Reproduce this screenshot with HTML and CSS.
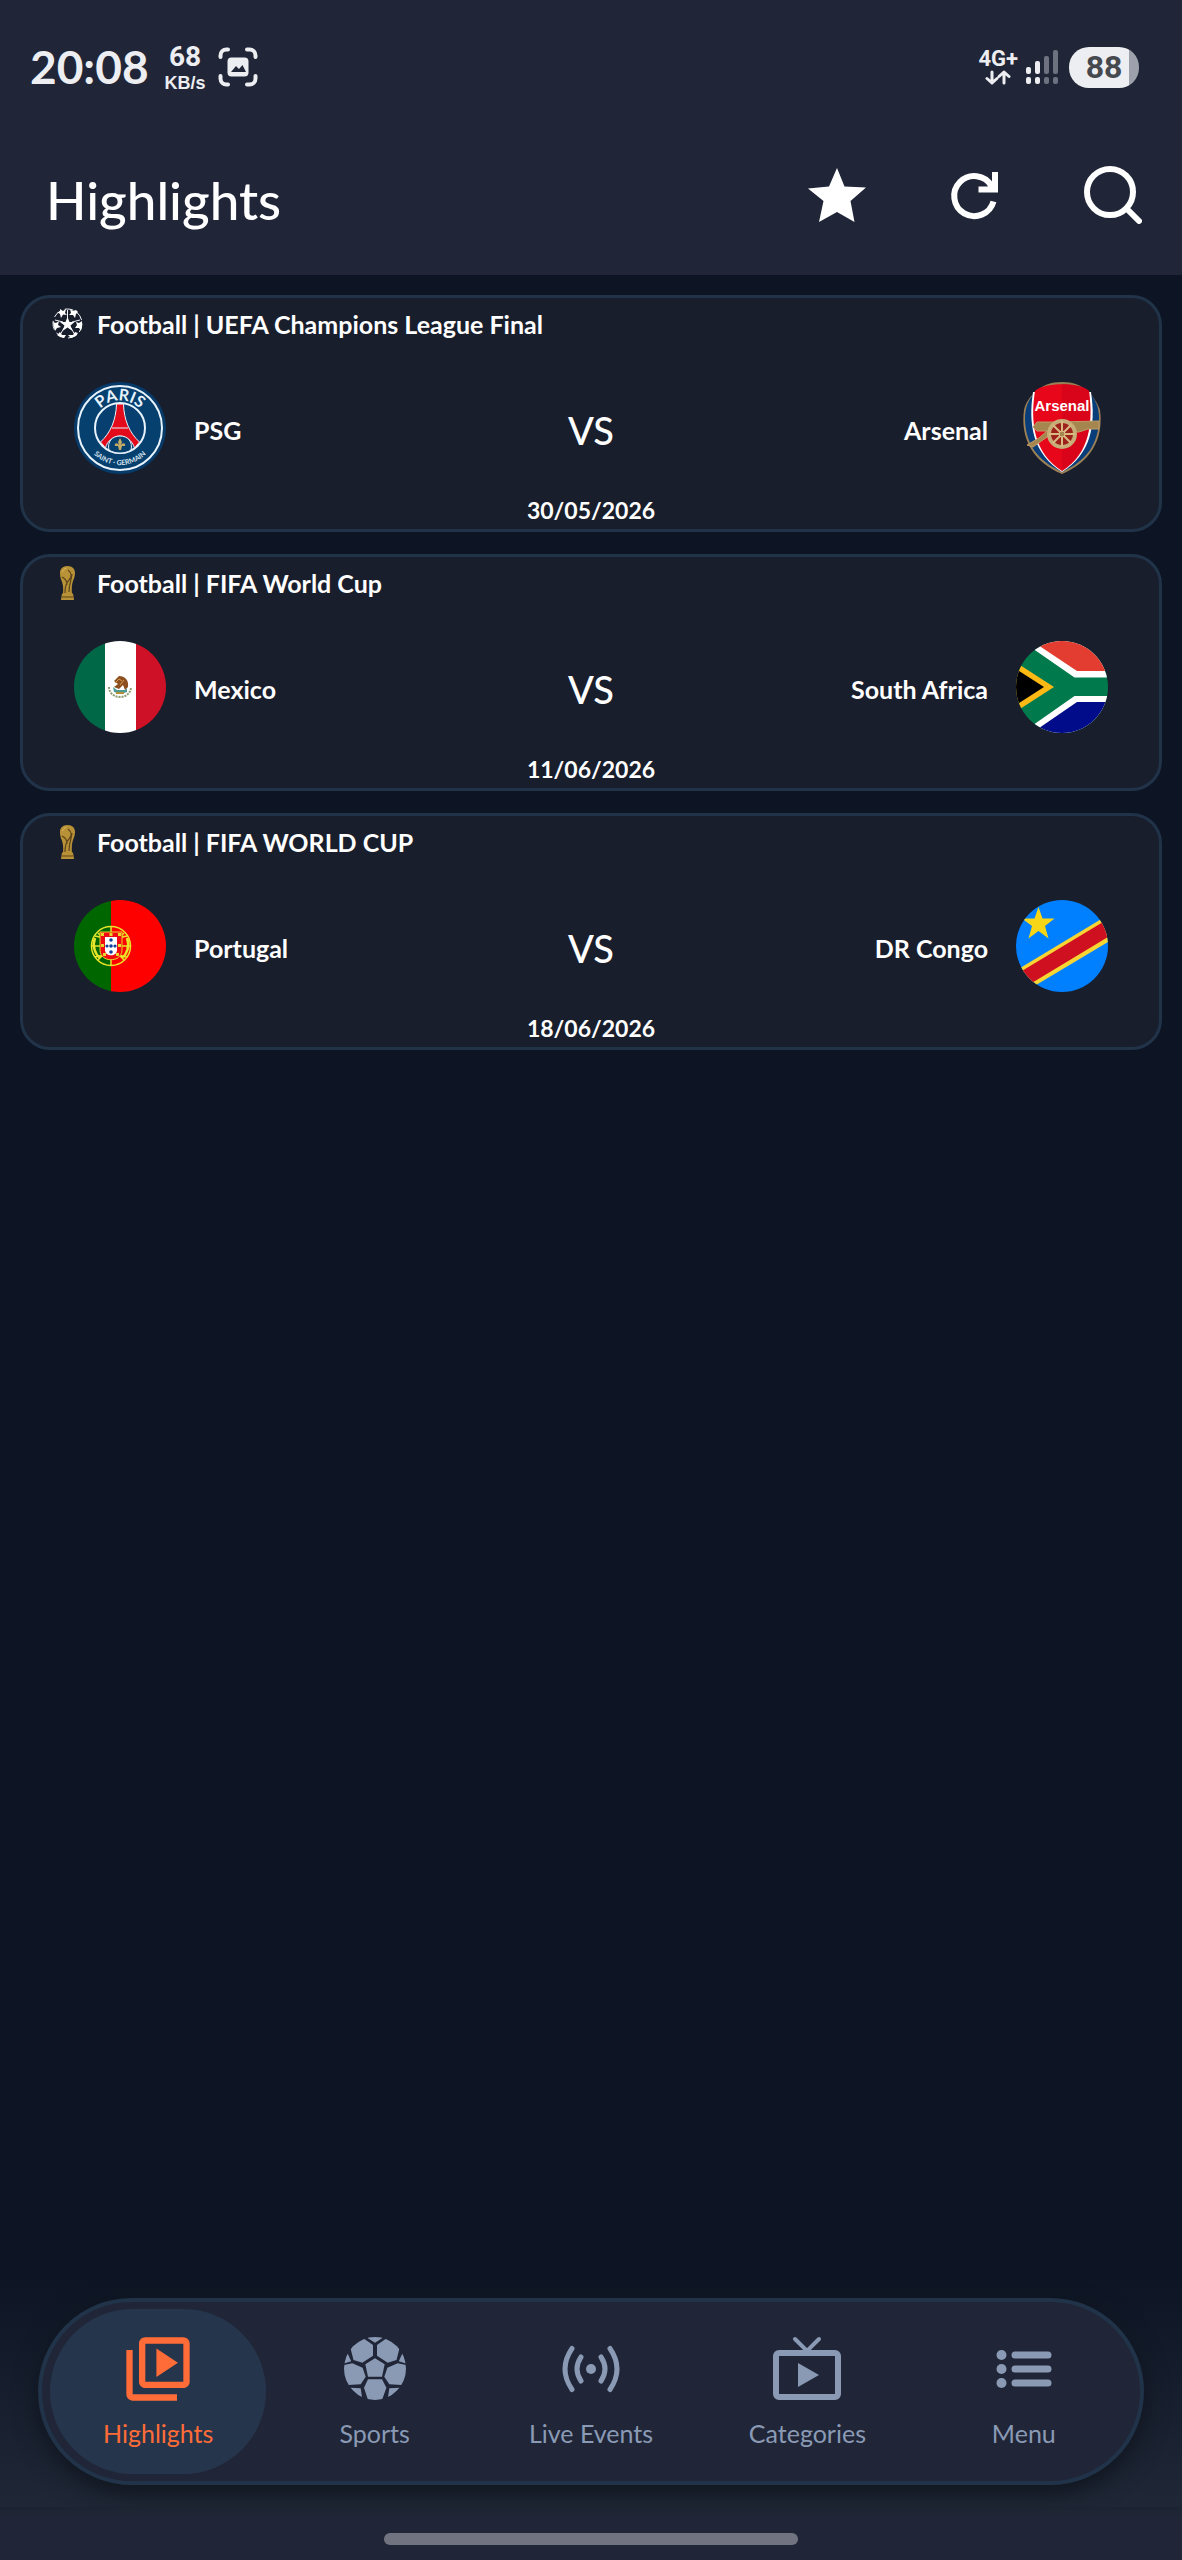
FILE: index.html
```html
<!DOCTYPE html>
<html lang="en">
<head>
<meta charset="utf-8">
<meta name="viewport" content="width=device-width, initial-scale=1">
<title>Highlights</title>
<link rel="stylesheet" href="styles.css">
</head>
<body>
<svg class="defs" width="0" height="0" aria-hidden="true">
  <defs>
    <clipPath id="round"><circle cx="46" cy="46" r="46"/></clipPath>
    <clipPath id="ball"><ellipse cx="31" cy="31.500" rx="31" ry="31.500"/></clipPath>
    <symbol id="trophy" viewBox="0 0 31 36">
      <path fill="#b99237" d="M15.500 1c5 0 7.500 3 7.500 7 0 3-.8 5-1.800 7.500-1.200 3-1.700 7-1.200 13.500h-9c.5-6 0-10-1.500-13.500C8.500 13 8 11 8 8c0-4 2.500-7 7.500-7z"/>
      <path fill="#b99237" d="M10 28.500h11l1 6.500H9z"/>
      <path fill="none" stroke="#5d461b" stroke-width="1.200" d="M16 5c4 3 4 7 1 10s-4 7-4 13M10 12c3 2 5 3 5 8M20 9c-1 8-3 10-3 18M10 32h11"/>
      <path fill="none" stroke="#dcb963" d="M10.500 7c.5-2 2-3.500 4-4"/>
    </symbol>
  </defs>
</svg>

<header class="top">
  <div class="status">
    <div class="status-group">
      <span class="clock">20:08</span>
      <span class="speed"><span class="speed-value">68</span><span class="speed-unit">KB/s</span></span>
      <svg class="capture" width="40" height="40" viewBox="0 0 40 40" fill="none" stroke="#eceef2" stroke-width="4" stroke-linecap="round" aria-hidden="true">
        <path d="M2.500 10V8.500a6 6 0 0 1 6-6H10M29 2.500h2.500a6 6 0 0 1 6 6V10M37.500 29v2.500a6 6 0 0 1-6 6H29M10 37.500H8.500a6 6 0 0 1-6-6V29"/>
        <rect x="9.500" y="10.500" width="21" height="19" rx="4" fill="#eceef2" stroke="none"/>
        <path d="M13 25l5-6 3 3 3.500-4 3.500 7z" fill="#202637" stroke="none"/>
      </svg>
    </div>
    <div class="status-group status-right">
      <span class="network"><span>4G+</span>
        <svg width="26" height="15" viewBox="0 0 26 15" fill="none" stroke="#eceef2" stroke-width="3" stroke-linecap="round" stroke-linejoin="round" aria-hidden="true"><path d="M7 2v11M2 8.500l5 4.500 5-4.500M19 13V2M14 6.500L19 2l5 4.500"/></svg>
      </span>
      <svg width="33" height="36" viewBox="0 0 33 36" fill="#eceef2" aria-hidden="true">
        <rect x="0" y="18" width="5" height="7" rx="2"/><rect x="9" y="12" width="5" height="13" rx="2"/>
        <rect x="0" y="28" width="5" height="7" rx="2"/><rect x="9" y="28" width="5" height="7" rx="2"/>
        <g fill="#6e7280"><rect x="18" y="7" width="5" height="18" rx="2"/><rect x="27" y="1" width="5" height="24" rx="2"/><rect x="18" y="28" width="5" height="7" rx="2"/><rect x="27" y="28" width="5" height="7" rx="2"/></g>
      </svg>
      <span class="battery">88</span>
    </div>
  </div>
  <div class="appbar">
    <h1>Highlights</h1>
    <div class="actions">
      <button type="button" aria-label="Favourites"><svg width="58" height="58" viewBox="0 0 58 58" aria-hidden="true"><path fill="#fff" d="M29 2l7.500 18.500L58 21.500 42.500 35 46.500 56 29 46 11 56l4.500-21L0 22.500l21-2z"/></svg></button>
      <button type="button" aria-label="Refresh"><svg width="58" height="58" viewBox="0 0 58 58" fill="none" stroke="#fff" stroke-width="6" aria-hidden="true"><path d="M47.500 35.500A20 20 0 1 1 45.500 20"/><path d="M49 6v17.500H32.500"/><path d="M46 15v8h-6z" fill="#fff" stroke="none"/></svg></button>
      <button type="button" aria-label="Search"><svg width="58" height="58" viewBox="0 0 58 58" fill="none" stroke="#fff" stroke-width="6" stroke-linecap="round" aria-hidden="true"><circle cx="26" cy="26" r="23"/><path d="M43 43l12 12"/></svg></button>
    </div>
  </div>
</header>

<main class="matches">
  <article class="match">
    <h2 class="match-head">
      <svg width="31" height="36" viewBox="0 0 31 36" aria-hidden="true">
        <g fill="none" stroke="#f3f5f8" stroke-width="1"><circle cx="15.500" cy="17.500" r="14.500" stroke-dasharray="9 4"/><path d="M15.500 4v9M28 14l-8 2M23 29l-4-7M8 29l4-7M3 14l8 2"/></g>
        <path fill="#fff" d="M15.500 11l2 5h5l-4 3.500 2 5.500-5-3.500-5 3.500 2-5.500-4.500-3.500h5.500zM8 3l3 2 3-2-1 4 2 2-4-.5L9 12 8 8 5 6h3zM24 4l-3 1-3-2 1 4-2 2h4l2 3 1-4 2-2zM1 16l3 1 3-2-1 4 3 2-4 1-2 3-1-4zM30 15l-3 2-3-1 1 3-2 3h4l2 3 1-5zM8 26l2 3h4l-2 3-4-1-3-2zM23 26l-2 3h-5l3 3 5-2 2-3z"/>
      </svg>
      <span>Football | UEFA Champions League Final</span>
    </h2>
    <div class="teams">
      <div class="team">
        <svg class="crest" viewBox="0 0 92 92" role="img" aria-label="PSG crest">
          <circle cx="46" cy="46" r="46" fill="#063a69"/>
          <circle cx="46" cy="46" r="42" fill="#06406f" stroke="#e8f3fb" stroke-width="2"/>
          <circle cx="46" cy="46" r="25" fill="#063f70" stroke="#e8f3fb" stroke-width="2"/>
          <path d="M42.500 22h7c.5 16 6 29 16 38l-5 6c-2-7-8-12-14.500-12S33 59 31.500 66l-5-6c10-9 15.500-22 16-38z" fill="#e30a1b" stroke="#e8f3fb"/>
          <path d="M38 46h16" stroke="#e8f3fb"/>
          <path d="M35 68c-2-8 3-14 11-14s13 6 11 14c-6 4-16 4-22 0z" fill="#06406f" stroke="#e8f3fb"/>
          <path d="M46 56l2 4-1 3c2-3 5-2 4 1h-3l-1 4h-2l-1-4h-3c-1-3 2-4 4-1l-1-3z" fill="#c4aa65"/>
          <path id="psg-top" d="M18.500 46a27.500 27.500 0 0 1 55 0" fill="none"/>
          <path id="psg-bottom" d="M9 46a37 37 0 0 0 74 0" fill="none"/>
          <text class="crest-paris"><textPath href="#psg-top" startOffset="50%">PARIS</textPath></text>
          <text class="crest-germain"><textPath href="#psg-bottom" startOffset="50%">SAINT · GERMAIN</textPath></text>
        </svg>
        <span>PSG</span>
      </div>
      <span class="versus">VS</span>
      <div class="team away">
        <span>Arsenal</span>
        <svg class="crest" viewBox="0 0 92 92" role="img" aria-label="Arsenal crest">
          <path d="M46 0c11 0 19 3 25 9 6 5 10 11 13 19 4 30-10 52-38 64C18 80 4 58 8 28c2-8 6-14 13-19C27 3 35 0 46 0z" fill="#9b8056"/>
          <path d="M20 10c-8 7-11 16-11 26 0 26 13 43 37 54 24-11 37-28 37-54 0-10-3-19-11-26z" fill="#083d79"/>
          <path d="M17 10c-5 33 0 62 29 80C75 72 80 43 75 10z" fill="#fff"/>
          <path d="M19 9C27 0 65 0 73 9c4 32 1 62-27 80C18 71 14 41 19 9z" fill="#e8061a"/>
          <path d="M46 2c12 0 21 2 27 7 4 32 1 62-27 80z" fill="#c90219" opacity=".5"/>
          <path d="M21 40h20l42-1v8H72l-9 3H38L17 65l-6-2 12-7 8-7H21l-4-4z" fill="#a6864f" stroke="#bd9b67"/>
          <circle cx="46" cy="52" r="13" fill="#9e221c" stroke="#c7ad78" stroke-width="4"/>
          <path d="M46 39v26M33 52h26M37 43l18 18M55 43L37 61" stroke="#d9bb82" stroke-width="2"/>
          <circle cx="46" cy="52" r="3" fill="#a6864f" stroke="#e1c48b"/>
          <text x="46" y="29" class="crest-arsenal">Arsenal</text>
        </svg>
      </div>
    </div>
    <time class="date" datetime="2026-05-30">30/05/2026</time>
  </article>

  <article class="match">
    <h2 class="match-head"><svg width="31" height="36" aria-hidden="true"><use href="#trophy"/></svg><span>Football | FIFA World Cup</span></h2>
    <div class="teams">
      <div class="team">
        <svg class="crest" viewBox="0 0 92 92" role="img" aria-label="Flag of Mexico">
          <g clip-path="url(#round)"><path fill="#006847" d="M0 0h31v92H0z"/><path fill="#fff" d="M31 0h31v92H31z"/><path fill="#ce1126" d="M62 0h30v92H62z"/></g>
          <path d="M35 46c0 6 5 10 11 10s11-4 11-10" fill="none" stroke="#8d9b6e" stroke-width="2" stroke-dasharray="2 1"/>
          <path d="M40 40l5-5c6 0 10 4 9 11l-3 3-2-5-4 4-5-2 4-3z" fill="#8b4f20"/>
          <path d="M39 46l4 3h8l2-2v4l-6 2-7-2z" fill="#4c9b94"/><path d="M41 42l4-4 3 2M46 44l4-5" stroke="#d79a4c" fill="none"/><path d="M42 52h8" stroke="#b58e36" stroke-width="2"/>
        </svg>
        <span>Mexico</span>
      </div>
      <span class="versus">VS</span>
      <div class="team away">
        <span>South Africa</span>
        <svg class="crest" viewBox="0 0 92 92" role="img" aria-label="Flag of South Africa">
          <g clip-path="url(#round)">
            <path fill="#007a4d" d="M0 0h92v92H0z"/>
            <path fill="#fff" d="M0-4h92v40.500H58.500zM0 96h92V55H58.500z"/>
            <path fill="#e23d30" d="M10-4h82v34H61z"/>
            <path fill="#000c8a" d="M92 61v35H10l51-35z"/>
            <path fill="#ffb915" d="M-4 19l42 27-42 27z"/><path fill="#000" d="M-4 25.500L28 46-4 66.500z"/>
          </g>
        </svg>
      </div>
    </div>
    <time class="date" datetime="2026-06-11">11/06/2026</time>
  </article>

  <article class="match">
    <h2 class="match-head"><svg width="31" height="36" aria-hidden="true"><use href="#trophy"/></svg><span>Football | FIFA WORLD CUP</span></h2>
    <div class="teams">
      <div class="team">
        <svg class="crest" viewBox="0 0 92 92" role="img" aria-label="Flag of Portugal">
          <g clip-path="url(#round)"><path fill="#060" d="M0 0h37v92H0z"/><path fill="red" d="M37 0h55v92H37z"/></g>
          <g fill="none" stroke="#e9e52a" stroke-width="1.500"><circle cx="37" cy="46" r="19.500"/><path d="M18 46h38M37 26v40M21 36c11 3 21 3 32 0M21 57c11-3 21-3 32 0M24 33l26 27M50 33L24 60"/><path d="M21 38c-3 8 0 16 5 20M53 38c3 8 0 16-5 20" stroke-width="2.500"/></g>
          <path d="M26 32h22v18c0 13-22 13-22 0z" fill="#f00b12" stroke="#e8d42b"/>
          <path d="M31 37h12v13c0 7-12 7-12 0z" fill="#fff"/>
          <g fill="#123e9b"><circle cx="37" cy="40" r="1.800"/><circle cx="37" cy="46" r="1.800"/><circle cx="37" cy="52" r="1.800"/><circle cx="33" cy="46" r="1.600"/><circle cx="41" cy="46" r="1.600"/></g>
          <g fill="#e9d52b"><path d="M27 33h3v3h-3zM35.500 33h3v3h-3zM44 33h3v3h-3zM27 44h3v3h-3zM44 44h3v3h-3zM29 53h3v3h-3zM42 53h3v3h-3z"/></g>
        </svg>
        <span>Portugal</span>
      </div>
      <span class="versus">VS</span>
      <div class="team away">
        <span>DR Congo</span>
        <svg class="crest" viewBox="0 0 92 92" role="img" aria-label="Flag of DR Congo">
          <g clip-path="url(#round)">
            <path fill="#007fff" d="M0 0h92v92H0z"/>
            <path fill="#f7d618" d="M22.500 7l4 11.500h12L29 26l3.500 12.500-10-7.500-10 7.500L16 26 6 18.500h12.500z"/>
            <path fill="#f7d633" d="M0 70.500L92 15v27L0 97z"/><path fill="#ce1021" d="M0 74.500L92 19v18L0 92.500z"/>
          </g>
        </svg>
      </div>
    </div>
    <time class="date" datetime="2026-06-18">18/06/2026</time>
  </article>
</main>

<footer class="bottom">
  <nav class="tabs" aria-label="Main">
    <a class="tab active" href="#highlights" aria-current="page">
      <svg width="76" height="76" viewBox="0 0 24 24" fill="currentColor" aria-hidden="true"><path d="M4 6H2v14c0 1.100.9 2 2 2h14v-2H4V6zm16-4H8c-1.100 0-2 .9-2 2v12c0 1.100.9 2 2 2h12c1.100 0 2-.9 2-2V4c0-1.100-.9-2-2-2zm0 14H8V4h12v12zM11.500 5.500v9l6.800-4.500z"/></svg>
      <span>Highlights</span>
    </a>
    <a class="tab" href="#sports">
      <svg width="76" height="76" viewBox="-7 -6 76 76" fill="currentColor" aria-hidden="true"><g clip-path="url(#ball)"><path d="M31 21.300l9.700 6L38 39.700H24l-2.700-12.400zM19 1l10 7v10.700l-10.700 7L9.500 23 6.500 11.300 13 3zM43 1L33 8v10.700l10.700 7 8.800-2.700 3-11.700L49 3zM0 28l8.300-1.700 10.300 4.400 3.100 9-5 7.600L4 48 0 42zM62 28l-8.300-1.700-10.300 4.400-3.100 9 5 7.600L58 48l4-6zM24 42.300h14l4.400 8.400L38 63H24l-4-12.300zM22 0h18l-9 5.700zM3 15l4.200 9.300L0 26.500zM59 15l-4.200 9.300 7.200 2.200zM6 50.700l10.700.6 1.600 11zM56 50.700l-10.700.6-1.600 11z"/></g></svg>
      <span>Sports</span>
    </a>
    <a class="tab" href="#live">
      <svg width="76" height="76" viewBox="0 0 76 76" fill="none" stroke="currentColor" stroke-width="5" stroke-linecap="round" aria-hidden="true"><circle cx="38" cy="38" r="5" fill="currentColor" stroke="none"/><path d="M28 26q-8 12 0 24M48 26q8 12 0 24M19 17.500q-14 20.500 0 41M57 17.500q14 20.500 0 41"/></svg>
      <span>Live Events</span>
    </a>
    <a class="tab" href="#categories">
      <svg width="76" height="76" viewBox="0 0 76 76" fill="none" stroke="currentColor" aria-hidden="true"><rect x="7" y="22" width="62" height="44" rx="3" stroke-width="6"/><path d="M26 8l12 12L50 8" stroke-width="4" stroke-linecap="round"/><path d="M29 32v24l21-12z" fill="currentColor" stroke="none"/></svg>
      <span>Categories</span>
    </a>
    <a class="tab" href="#menu">
      <svg width="76" height="76" viewBox="0 0 76 76" fill="currentColor" aria-hidden="true"><circle cx="15.500" cy="24" r="5"/><circle cx="15.500" cy="38" r="5"/><circle cx="15.500" cy="52" r="5"/><path d="M29 24h33M29 38h33M29 52h33" stroke="currentColor" stroke-width="7" stroke-linecap="round"/></svg>
      <span>Menu</span>
    </a>
  </nav>
  <div class="gesture"><span class="home-bar"></span></div>
</footer>
</body>
</html>
```
FILE: styles.css
```css
* { box-sizing: border-box; }

body {
  margin: 0;
  min-height: 100vh;
  display: flex;
  flex-direction: column;
  background: #0d1423;
  color: #fff;
  font-family: Lato, "Open Sans", sans-serif;
}

svg { display: block; flex: none; }
.defs { position: absolute; }

.top { background: #202637; }

.status {
  display: flex;
  justify-content: space-between;
  padding: 40px 43px 0 30px;
  color: #eceef2;
}
.status-group { display: flex; align-items: center; gap: 16px; height: 54px; }
.status-right { gap: 8px; }
.clock { font-size: 46px; line-height: 54px; font-weight: 700; }
.speed { display: flex; flex-direction: column; align-items: center; font-weight: 700; }
.speed-value { font: 700 28px/32px Roboto, sans-serif; }
.speed-unit { font: 700 18px/20px "Liberation Sans", sans-serif; }
.capture { margin-left: -4px; }
.network { display: flex; flex-direction: column; align-items: center; gap: 1px; font: 700 22px/20px Roboto, sans-serif; }
.battery {
  width: 70px;
  margin-left: 2px;
  border-radius: 20px;
  background: linear-gradient(90deg, #eceef2 86%, #9da1ac 86%);
  color: #46484f;
  font: 700 32px/41px Roboto, sans-serif;
  text-align: center;
}

.appbar {
  display: flex;
  align-items: center;
  justify-content: space-between;
  height: 181px;
  padding: 20px 40px 0 46px;
}
h1 { margin: 0; font-size: 53px; line-height: 64px; font-weight: 500; padding-top: 10px; }
.actions { display: flex; gap: 80px; }
button { padding: 0; border: 0; background: none; cursor: pointer; }

.matches { display: flex; flex-direction: column; gap: 22px; padding: 20px; }
.match {
  display: flex;
  flex-direction: column;
  padding: 8px 51px 5px;
  border: 3px solid #203349;
  border-radius: 30px;
  background: #191e2c;
  font-weight: 700;
}
.match-head {
  display: flex;
  align-items: center;
  gap: 14px;
  margin: 0 -22px 40px;
  font-size: 25px;
  line-height: 36px;
}
.teams { display: grid; grid-template-columns: 1fr auto 1fr; align-items: center; font-size: 25px; line-height: 32px; }
.team { display: flex; align-items: center; gap: 28px; }
.away { justify-content: flex-end; }
.crest { width: 92px; height: 92px; }
.versus { font-size: 38px; line-height: 48px; font-weight: 500; }
.team span, .versus { padding-top: 4px; }
.date { margin-top: 22px; font-size: 23px; line-height: 28px; text-align: center; }

.crest-paris { font: 700 16px Lato, sans-serif; fill: #e8f3fb; text-anchor: middle; }
.crest-germain { font: 700 7px Lato, sans-serif; fill: #d5e3ee; text-anchor: middle; }
.crest-arsenal { font: 700 15px "Liberation Sans", sans-serif; fill: #fff; text-anchor: middle; }

.bottom {
  margin-top: auto;
  padding-top: 24px;
  background: linear-gradient(#0d1423, #202837 236px);
}
.tabs {
  display: flex;
  margin: 0 38px;
  padding: 7px 8px;
  border: 4px solid #203349;
  border-radius: 94px;
  background: #202637;
  box-shadow: 0 8px 24px #0f151d;
}
.tab {
  flex: 1;
  display: flex;
  flex-direction: column;
  align-items: center;
  gap: 8px;
  padding: 22px 0 23px;
  border-radius: 83px;
  color: #8a9ab5;
  font-size: 25px;
  line-height: 36px;
  text-decoration: none;
}
.active { background: #25354c; color: #ff6c37; }

.gesture {
  position: relative;
  display: flex;
  justify-content: center;
  margin-top: 22px;
  padding: 26px 0 15px;
  background: linear-gradient(#1c2432, #202637 10px);
}
.home-bar { width: 35%; height: 12px; border-radius: 6px; background: #717480; }
```
